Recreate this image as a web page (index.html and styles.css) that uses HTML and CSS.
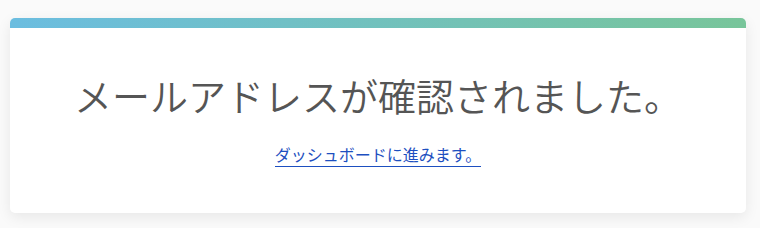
FILE: index.html
```html
<!DOCTYPE html>
<html lang="ja">
<head>
<meta charset="utf-8">
<link rel="stylesheet" href="styles.css">
</head>
<body>
<div class="card">
  <div class="bar"></div>
  <div class="content">
    <h1 class="title">メールアドレスが確認されました。</h1>
    <a class="link" href="#">ダッシュボードに進みます。</a>
  </div>
</div>
</body>
</html>
```
FILE: styles.css
```css
html, body {
  margin: 0;
  padding: 0;
  background: #fafafa;
}
body {
  padding: 18px 14px 15px 10px;
  font-family: "Noto Sans CJK JP", "Noto Sans", sans-serif;
}
.card {
  background: #fff;
  border-radius: 5px;
  overflow: hidden;
  box-shadow: 0 4px 14px rgba(0, 0, 0, 0.08);
}
.bar {
  height: 10px;
  background: linear-gradient(to right, #6bbde0, #78c59a);
}
.content {
  display: flex;
  flex-direction: column;
  align-items: center;
  padding: 43px 0 46px;
}
.title {
  margin: 0;
  font-size: 38px;
  font-weight: 350;
  line-height: 48px;
  color: #555;
}
.link {
  margin-top: 25px;
  padding-bottom: 2px;
  font-size: 16px;
  line-height: 20px;
  color: #1d4fc0;
  text-decoration: none;
  border-bottom: 1px solid #1d4fc0;
}
```
